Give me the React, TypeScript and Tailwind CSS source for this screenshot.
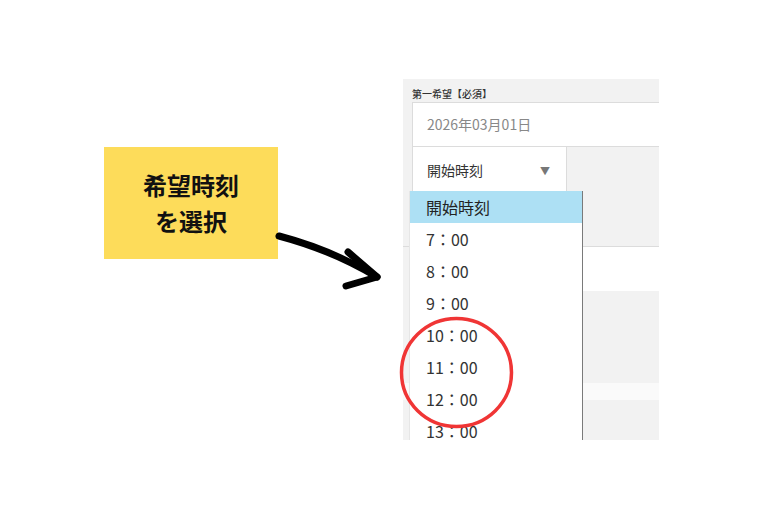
import React from "react";

const font = { fontFamily: '"Noto Sans CJK JP", "Noto Sans", sans-serif' };

const times = ["7：00", "8：00", "9：00", "10：00", "11：00", "12：00", "13：00"];

const Dropdown = () => (
  <div className="absolute left-[6px] top-[112px] w-[174px] bg-white border-r border-[#7a7a7a] border-l border-l-[#e6e6e6]">
    <div className="h-[32px] flex items-center pl-[16px] bg-[#ade0f4] text-[16px] text-[#222]">
      開始時刻
    </div>
    {times.map((t) => (
      <div key={t} className="h-[32px] flex items-center pl-[16px] text-[16px] text-[#333]">
        {t}
      </div>
    ))}
  </div>
);

const FormShot = () => (
  <div className="relative w-[256px] h-[361px] bg-[#f2f2f2] overflow-hidden">
    <div className="pl-[9px] pt-[8px] h-[23px] text-[10px] leading-[14px] font-medium text-[#333]">
      第一希望【必須】
    </div>
    <div className="ml-[9px] h-[45px] bg-white border border-r-0 border-[#dcdcdc] flex items-center pl-[14px] text-[14px] text-[#888]">
      2026年03月01日
    </div>
    <div className="h-[100px] border-b border-[#dcdcdc] pl-[9px]">
      <div className="w-[155px] h-[46px] bg-white border-l border-r border-[#dcdcdc] flex items-center justify-between pl-[14px] pr-[16px] text-[14px] text-[#333]">
        <span>開始時刻</span>
        <span className="text-[10px] text-[#777]">▼</span>
      </div>
    </div>
    <div className="ml-[9px] h-[44px] bg-white" />
    <div className="h-[92px]" />
    <div className="h-[17px] bg-[#fafafa]" />
    <div className="h-[40px]" />
    <Dropdown />
  </div>
);

export default function App() {
  return (
    <div className="relative w-[770px] h-[520px] bg-white overflow-hidden" style={font}>
      <div className="flex items-start pt-[79px]">
        <div className="ml-[104px] mt-[68px] w-[174px] h-[112px] bg-[#fddc5a] flex flex-col items-center justify-center text-[24px] leading-[36px] font-bold text-[#111]">
          <span>希望時刻</span>
          <span>を選択</span>
        </div>
        <div className="ml-[125px]">
          <FormShot />
        </div>
      </div>
      <svg className="absolute left-0 top-0" width="770" height="520" viewBox="0 0 770 520" fill="none">
        <path d="M279 236 Q332 250 377 277" stroke="#000" strokeWidth="7" strokeLinecap="round" />
        <path d="M348 252 L377 277 L346 286" stroke="#000" strokeWidth="7" strokeLinecap="round" strokeLinejoin="round" />
        <ellipse cx="456.5" cy="372.5" rx="55" ry="54" stroke="#f03535" strokeWidth="3.5" />
      </svg>
    </div>
  );
}
